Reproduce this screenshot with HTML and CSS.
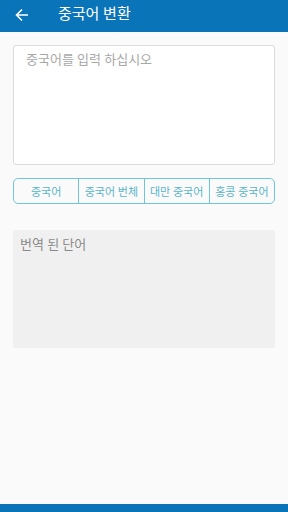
FILE: index.html
```html
<!DOCTYPE html>
<html lang="ko">
<head>
<meta charset="utf-8">
<link rel="stylesheet" href="styles.css">
</head>
<body>
<div class="app">
  <header class="bar">
    <svg class="back" width="14" height="14" viewBox="0 0 14 14"><path d="M13 7H2M7 1.5 1.5 7 7 12.5" fill="none" stroke="#fff" stroke-width="1.6"/></svg>
    <span class="title">중국어 변환</span>
  </header>
  <main class="content">
    <div class="input">중국어를 입력 하십시오</div>
    <div class="seg">
      <div class="seg-item">중국어</div>
      <div class="seg-item">중국어 번체</div>
      <div class="seg-item">대만 중국어</div>
      <div class="seg-item">홍콩 중국어</div>
    </div>
    <div class="output">번역 된 단어</div>
  </main>
  <footer class="bottom"></footer>
</div>
</body>
</html>
```
FILE: styles.css
```css
* { box-sizing: border-box; }
html, body { margin: 0; padding: 0; }
body {
  width: 288px;
  height: 512px;
  background: #fafafa;
  font-family: Roboto, "Noto Sans CJK KR", sans-serif;
  overflow: hidden;
}
.app {
  height: 512px;
  display: flex;
  flex-direction: column;
}
.bar {
  height: 32px;
  background: #0a74b9;
  display: flex;
  align-items: center;
  padding: 0 0 2px 15px;
  flex-shrink: 0;
}
.back { display: block; margin-top: -1px; }
.title {
  color: #fff;
  font-size: 15px;
  margin-left: 29px;
  line-height: 1;
  margin-top: -2px;
}
.content {
  flex: 1;
  padding: 13px 13px 0 13px;
  display: flex;
  flex-direction: column;
}
.input {
  height: 120px;
  background: #fff;
  border: 1px solid #dcdcdc;
  border-radius: 3px;
  padding: 5px 12px;
  font-size: 13px;
  color: #a8a8a8;
  line-height: 18px;
}
.seg {
  margin-top: 13px;
  height: 26px;
  border: 1px solid #6ec6d8;
  border-radius: 5px;
  display: flex;
  overflow: hidden;
}
.seg-item {
  flex: 1;
  display: flex;
  align-items: center;
  justify-content: center;
  font-size: 11px;
  color: #5ab5c9;
  border-left: 1px solid #6ec6d8;
  white-space: nowrap;
}
.seg-item:first-child { border-left: none; }
.output {
  margin-top: 26px;
  height: 118px;
  background: #f0f0f0;
  border-radius: 2px;
  padding: 6px 7px;
  font-size: 13px;
  color: #8a8a8a;
  line-height: 18px;
}
.bottom {
  height: 8px;
  background: #0a74b9;
  flex-shrink: 0;
}
```
